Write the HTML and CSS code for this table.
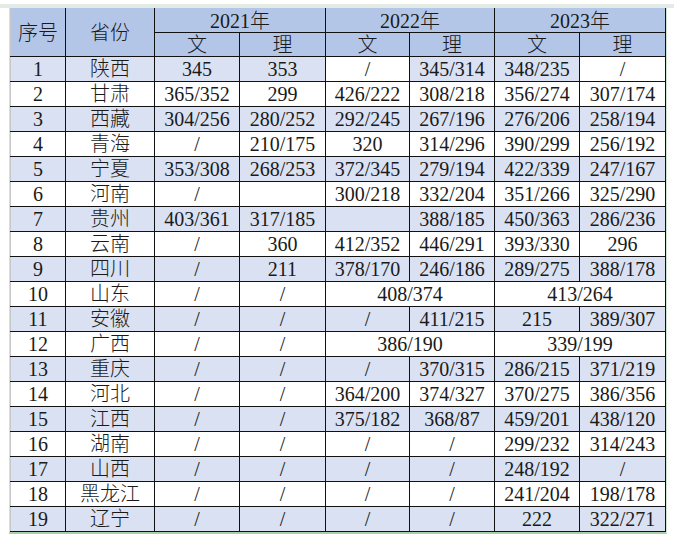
FILE: index.html
```html
<!DOCTYPE html>
<html lang="zh">
<head>
<meta charset="utf-8">
<title>分数线</title>
<link rel="stylesheet" href="styles.css">
</head>
<body>
<div class="sheet">
  <div class="topstrip"></div>
  <div class="frame">
    <table class="grid">
      <colgroup>
        <col class="c-no"><col class="c-prov"><col class="c1"><col class="c2"><col class="c3"><col class="c4"><col class="c5"><col class="c6">
      </colgroup>
      <thead>
        <tr class="h1"><th rowspan="2">序号</th><th rowspan="2">省份</th><th colspan="2">2021年</th><th colspan="2">2022年</th><th colspan="2">2023年</th></tr>
        <tr class="h2"><th>文</th><th>理</th><th>文</th><th>理</th><th>文</th><th>理</th></tr>
      </thead>
      <tbody>
        <tr class="odd"><td>1</td><td>陕西</td><td>345</td><td>353</td><td class="w">/</td><td>345/314</td><td>348/235</td><td class="w">/</td></tr>
        <tr><td>2</td><td>甘肃</td><td>365/352</td><td>299</td><td>426/222</td><td>308/218</td><td>356/274</td><td>307/174</td></tr>
        <tr class="odd"><td>3</td><td>西藏</td><td>304/256</td><td>280/252</td><td>292/245</td><td>267/196</td><td>276/206</td><td>258/194</td></tr>
        <tr><td>4</td><td>青海</td><td>/</td><td>210/175</td><td>320</td><td>314/296</td><td>390/299</td><td>256/192</td></tr>
        <tr class="odd"><td>5</td><td>宁夏</td><td>353/308</td><td>268/253</td><td>372/345</td><td>279/194</td><td>422/339</td><td>247/167</td></tr>
        <tr><td>6</td><td>河南</td><td>/</td><td></td><td>300/218</td><td>332/204</td><td>351/266</td><td>325/290</td></tr>
        <tr class="odd"><td>7</td><td>贵州</td><td>403/361</td><td>317/185</td><td></td><td>388/185</td><td>450/363</td><td>286/236</td></tr>
        <tr><td>8</td><td>云南</td><td>/</td><td>360</td><td>412/352</td><td>446/291</td><td>393/330</td><td>296</td></tr>
        <tr class="odd"><td>9</td><td>四川</td><td>/</td><td>211</td><td>378/170</td><td>246/186</td><td>289/275</td><td>388/178</td></tr>
        <tr><td>10</td><td>山东</td><td>/</td><td>/</td><td colspan="2">408/374</td><td colspan="2">413/264</td></tr>
        <tr class="odd"><td>11</td><td>安徽</td><td>/</td><td>/</td><td>/</td><td>411/215</td><td>215</td><td>389/307</td></tr>
        <tr><td>12</td><td>广西</td><td>/</td><td>/</td><td colspan="2">386/190</td><td colspan="2">339/199</td></tr>
        <tr class="odd"><td>13</td><td>重庆</td><td>/</td><td>/</td><td>/</td><td>370/315</td><td>286/215</td><td>371/219</td></tr>
        <tr><td>14</td><td>河北</td><td>/</td><td>/</td><td>364/200</td><td>374/327</td><td>370/275</td><td>386/356</td></tr>
        <tr class="odd"><td>15</td><td>江西</td><td>/</td><td>/</td><td>375/182</td><td>368/87</td><td>459/201</td><td>438/120</td></tr>
        <tr><td>16</td><td>湖南</td><td>/</td><td>/</td><td>/</td><td>/</td><td>299/232</td><td>314/243</td></tr>
        <tr class="odd"><td>17</td><td>山西</td><td>/</td><td>/</td><td>/</td><td>/</td><td>248/192</td><td>/</td></tr>
        <tr><td>18</td><td>黑龙江</td><td>/</td><td>/</td><td>/</td><td>/</td><td>241/204</td><td>198/178</td></tr>
        <tr class="odd"><td>19</td><td>辽宁</td><td>/</td><td>/</td><td>/</td><td>/</td><td>222</td><td>322/271</td></tr>
      </tbody>
    </table>
  </div>
</div>
</body>
</html>
```

FILE: styles.css
```css
html, body {
  margin: 0;
  padding: 0;
  background: #ffffff;
}

.sheet {
  width: 674px;
  height: 544px;
  position: relative;
  overflow: hidden;
}

.topstrip {
  height: 4px;
  margin-top: 4px;
  background: #e4ebe4;
}

.frame {
  margin-left: 9px;
  width: 658px;
  border-left: 1px solid #dcdcdc;
  border-right: 2px solid #cfe3cf;
  border-bottom: 2px solid #a9cfa9;
  box-sizing: border-box;
}

.grid {
  border-collapse: collapse;
  table-layout: fixed;
  width: 655px;
  font-family: "Liberation Serif", "Noto Sans CJK SC", serif;
  font-size: 20px;
  font-weight: 300;
  color: #1a1a1a;
}

.c-no { width: 55px; }
.c-prov { width: 89px; }
.c1 { width: 85px; }
.c2 { width: 86px; }
.c3 { width: 84px; }
.c4 { width: 85px; }
.c5 { width: 85px; }
.c6 { width: 86px; }

.grid th,
.grid td {
  border: 1px solid #111111;
  padding: 0;
  text-align: center;
  vertical-align: middle;
  font-weight: 300;
  line-height: 22px;
  white-space: nowrap;
  overflow: hidden;
}

.grid thead th {
  background: #b4c6e7;
  height: 23px;
}

.grid thead tr.h1 th {
  border-top-color: #b4c6e7;
}

.grid thead tr.h1 th:first-child,
.grid tbody td:first-child {
  border-left-color: #c8c8c8;
}

.grid tbody td {
  height: 24px;
  background: #ffffff;
}

.grid tbody tr.odd td {
  background: #d9e1f2;
}

.grid tbody tr.odd td.w {
  background: #ffffff;
}
```
